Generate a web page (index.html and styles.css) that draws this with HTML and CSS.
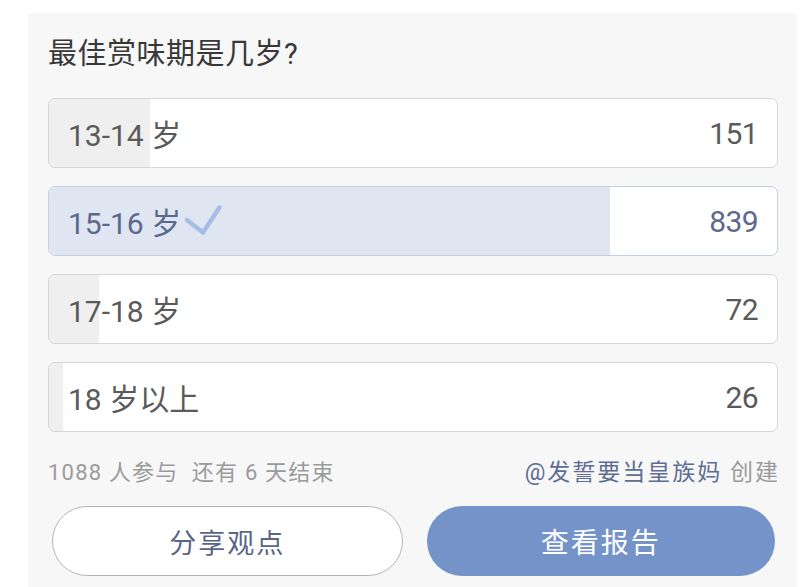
FILE: index.html
```html
<!DOCTYPE html>
<html lang="zh-CN">
<head>
<meta charset="utf-8">
<title>投票</title>
<link rel="stylesheet" href="styles.css">
</head>
<body>
<div class="panel">
  <h1 class="title">最佳赏味期是几岁?</h1>
  <div class="options">
    <div class="option">
      <div class="fill" style="width:13.9%"></div>
      <span class="label">13-14 岁</span>
      <span class="count">151</span>
    </div>
    <div class="option selected">
      <div class="fill" style="width:77.1%"></div>
      <span class="label">15-16 岁<svg class="check" width="38" height="32" viewBox="0 0 38 32"><path d="M3 16 L19 28.5 L35.5 3.5" fill="none" stroke="#a7bde5" stroke-width="4.5" stroke-linecap="round" stroke-linejoin="round"/></svg></span>
      <span class="count">839</span>
    </div>
    <div class="option">
      <div class="fill" style="width:6.8%"></div>
      <span class="label">17-18 岁</span>
      <span class="count">72</span>
    </div>
    <div class="option">
      <div class="fill" style="width:1.9%"></div>
      <span class="label">18 岁以上</span>
      <span class="count">26</span>
    </div>
  </div>
  <div class="meta">
    <span class="stats">1088 人参与&nbsp;&nbsp;还有 6 天结束</span>
    <span class="creator"><span class="author">@发誓要当皇族妈</span> 创建</span>
  </div>
  <div class="actions">
    <button class="btn btn-share">分享观点</button>
    <button class="btn btn-report">查看报告</button>
  </div>
</div>
</body>
</html>
```
FILE: styles.css
```css
html, body {
  margin: 0;
  padding: 0;
  background: #ffffff;
}
body {
  font-family: Roboto, "Noto Sans CJK SC", sans-serif;
  width: 806px;
  height: 587px;
  overflow: hidden;
}
.panel {
  margin: 13px 0 0 28px;
  width: 769px;
  height: 574px;
  box-sizing: border-box;
  background: #f7f7f7;
  padding: 23px 19px 0 20px;
}
.title {
  margin: 0 0 26px 0;
  font-weight: 400;
  font-size: 29px;
  line-height: 36px;
  letter-spacing: 0.5px;
  color: #383838;
}
.options {
  display: flex;
  flex-direction: column;
  gap: 18px;
}
.option {
  position: relative;
  height: 70px;
  box-sizing: border-box;
  border: 1px solid #d6d6d6;
  border-radius: 7px;
  background: #ffffff;
  overflow: hidden;
  display: flex;
  align-items: center;
  justify-content: space-between;
  padding: 0 19px 0 19px;
  font-size: 30px;
  color: #5a5a5a;
}
.fill {
  position: absolute;
  left: 0;
  top: 0;
  bottom: 0;
  background: #efefef;
}
.label, .count {
  position: relative;
  display: flex;
  align-items: center;
}
.count {
  letter-spacing: -0.6px;
}
.option.selected {
  border-color: #c5cfe2;
  color: #5a698c;
}
.option.selected .fill {
  background: #dfe6f2;
}
.check {
  margin-left: 3px;
  margin-top: -2px;
}
.meta {
  margin-top: 24px;
  height: 28px;
  display: flex;
  justify-content: space-between;
  align-items: center;
  font-size: 22px;
  letter-spacing: 1.2px;
  color: #9a9a9a;
}
.creator {
  font-size: 23px;
  letter-spacing: 2px;
  margin-right: -2px;
}
.author {
  color: #5d6d93;
}
.actions {
  margin-top: 22px;
  display: flex;
  gap: 24px;
  padding: 0 3px 0 4px;
}
.btn {
  flex: 1;
  height: 70px;
  border-radius: 35px;
  font-family: Roboto, "Noto Sans CJK SC", sans-serif;
  font-size: 27px;
  letter-spacing: 2px;
  cursor: pointer;
}
.btn-share {
  background: #ffffff;
  border: 1px solid #b5b5b5;
  color: #5a6586;
}
.btn-report {
  background: #7393c9;
  border: none;
  color: #ffffff;
  font-size: 28px;
}
```
